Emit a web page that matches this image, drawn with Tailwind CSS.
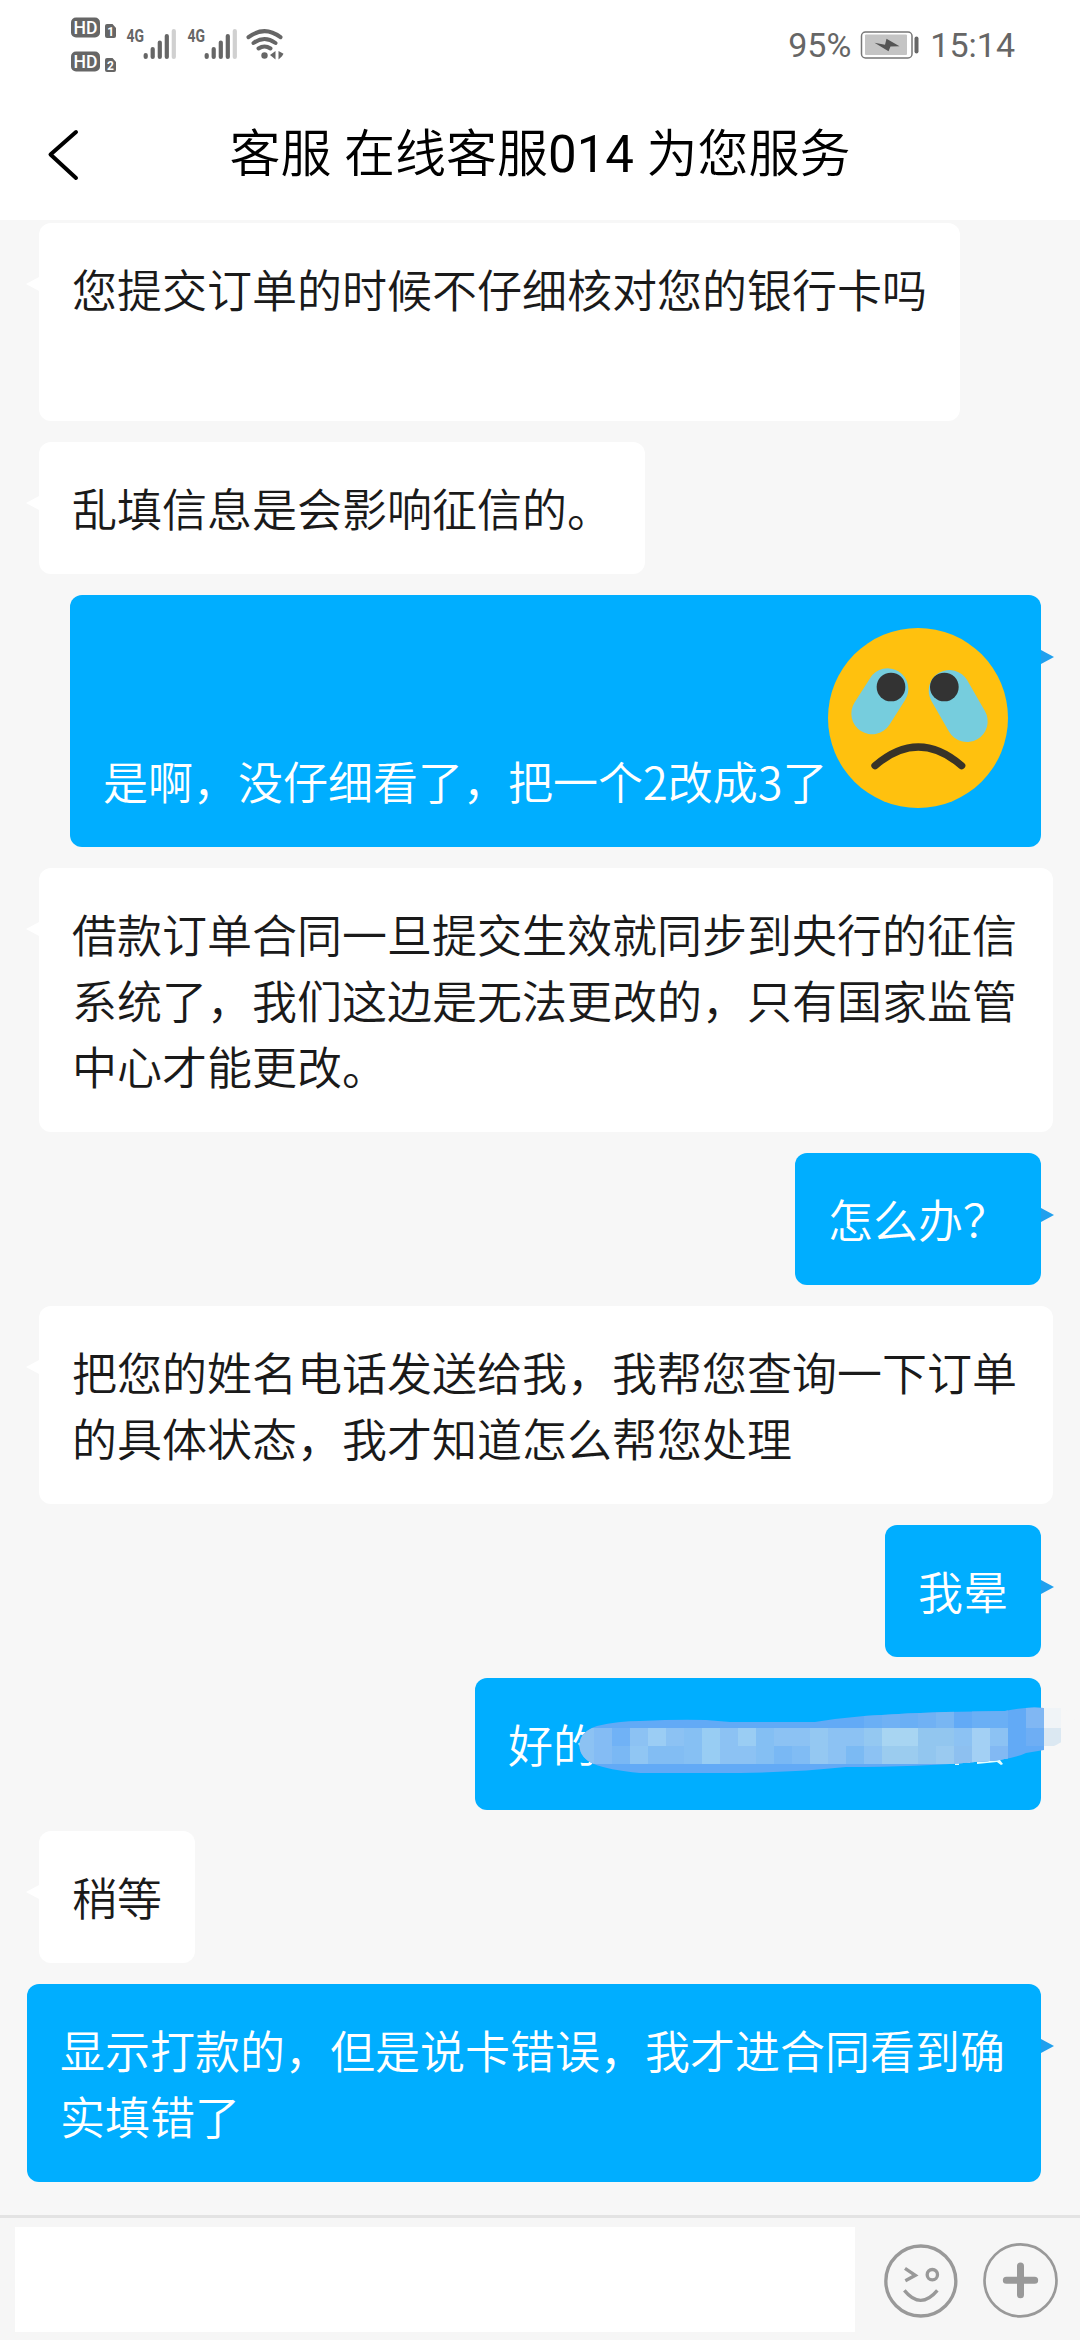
<!DOCTYPE html>
<html lang="zh-CN">
<head>
<meta charset="utf-8">
<title>在线客服</title>
<script src="https://cdn.jsdelivr.net/npm/@tailwindcss/browser@4"></script>
</head>
<body class="w-[1080px] h-[2340px] overflow-hidden flex flex-col bg-[#f7f7f7] text-[#1a1a1a] font-[350] font-['Noto_Sans_CJK_SC',sans-serif]">

<!-- Status bar -->
<div class="h-[90px] shrink-0 bg-white flex justify-between text-[#666]">
  <svg class="w-[310px] h-[90px]" viewBox="0 0 310 90" fill="#666" font-family="Roboto, sans-serif" font-weight="500">
    <rect x="71" y="17.5" width="29" height="20" rx="5"/>
    <text x="73.6" y="34" font-size="18.5" fill="#fff" textLength="24" lengthAdjust="spacingAndGlyphs">HD</text>
    <rect x="71" y="51.5" width="29" height="20" rx="5"/>
    <text x="73.6" y="68" font-size="18.5" fill="#fff" textLength="24" lengthAdjust="spacingAndGlyphs">HD</text>
    <path d="M107 24h5.500l3.500 4v8a2 2 0 0 1-2 2h-7a2 2 0 0 1-2-2v-10a2 2 0 0 1 2-2z"/>
    <text x="107.300" y="36" font-size="12" font-weight="700" fill="#fff">1</text>
    <path d="M107 58h5.500l3.500 4v8a2 2 0 0 1-2 2h-7a2 2 0 0 1-2-2v-10a2 2 0 0 1 2-2z"/>
    <text x="107" y="70" font-size="12" font-weight="700" fill="#fff">2</text>
    <text x="126.500" y="42" font-size="18.500" font-weight="700" textLength="17.500" lengthAdjust="spacingAndGlyphs">4G</text>
    <text x="187.500" y="42" font-size="18.500" font-weight="700" textLength="17.500" lengthAdjust="spacingAndGlyphs">4G</text>
    <g stroke="#666" stroke-width="4.200" stroke-linecap="round">
      <path d="M145.700 55v2M152.700 49v8M159.800 42.500v14.500M166.800 36v21"/>
      <path d="M173.800 31v26" stroke="#d0d0d0"/>
      <path d="M206.700 55v2M213.700 49v8M220.800 42.500v14.500M227.800 36v21"/>
      <path d="M234.800 31v26" stroke="#d0d0d0"/>
    </g>
    <g fill="none" stroke="#666" stroke-width="4" stroke-linecap="round">
      <path d="M248.500 37.200Q264.500 25 280.500 37.200M253.500 43Q264.500 35 275.500 43M258.500 48.500Q264.500 44.500 270.500 48.500"/>
    </g>
    <circle cx="264.500" cy="55.500" r="3.200"/>
    <path d="M275.500 51v8.500l-5.500-4.500zM278.500 51l5 2.700-1.500 2.500-3.500 3.300z"/>
  </svg>
  <div class="flex items-center pr-[65px] text-[34px] leading-none font-normal font-['Roboto']">
    <span>95%</span>
    <svg class="w-[59px] h-[28px] ml-[9px] mr-[11px]" viewBox="861 30.500 59 28">
      <rect x="862.500" y="31.500" width="50.500" height="26" rx="4" fill="#fff" stroke="#777" stroke-width="1.500"/>
      <rect x="866" y="34" width="42" height="20.500" rx="1" fill="#c4c4c4"/>
      <path d="M875.500 42.300l10.500 2 1.500-6 13 7.500-9 .2-2 4.700z" fill="#555"/>
      <rect x="915.500" y="36" width="4" height="17" rx="2" fill="#666"/>
    </svg>
    <span>15:14</span>
  </div>
</div>

<!-- Title bar -->
<header class="h-[130px] shrink-0 bg-white flex items-start">
  <svg class="w-[34px] h-[54px] ml-[46px] mt-[37px]" viewBox="46 127 34 54" fill="none" stroke="#000" stroke-width="4" stroke-linecap="round" stroke-linejoin="round"><path d="M76 132L50.500 154.500 76 178"/></svg>
  <h1 class="flex-1 mt-[27px] mr-[80px] text-center text-[51px] leading-[76px] text-black font-[350] whitespace-nowrap font-['Roboto','Noto_Sans_CJK_SC',sans-serif]">客服 在线客服<span class="font-normal">014</span> 为您服务</h1>
</header>

<!-- Conversation -->
<main class="h-[1995px] shrink-0 flex flex-col items-start gap-[21px] pt-[3px] pl-[39px] pr-[27px] text-[45px] leading-[66px]">
  <div class="relative bg-white rounded-[12px] p-[33px] h-[198px]">
    <svg class="absolute left-[-13px] top-[54px] w-[13px] h-[14px]" viewBox="0 0 13 14"><path d="M13 0v14L0 7z" fill="#fff"/></svg>
    您提交订单的时候不仔细核对您的银行卡吗
  </div>
  <div class="relative bg-white rounded-[12px] p-[33px]">
    <svg class="absolute left-[-13px] top-[54px] w-[13px] h-[14px]" viewBox="0 0 13 14"><path d="M13 0v14L0 7z" fill="#fff"/></svg>
    乱填信息是会影响征信的。
  </div>
  <div class="relative self-end mr-[12px] bg-[#00aeff] text-white rounded-[12px] p-[33px] w-[971px] h-[252px] flex items-end justify-between whitespace-nowrap">
    <svg class="absolute right-[-13px] top-[55px] w-[13px] h-[14px]" viewBox="0 0 13 14"><path d="M0 0v14l13-7z" fill="#20a0ee"/></svg>
    <span>是啊，没仔细看了，把一个2改成3了</span>
    <svg class="w-[180px] h-[180px] mb-[6px]" viewBox="143 143 540 540">
      <circle cx="413" cy="413" r="270" fill="#ffc10e"/>
      <g stroke="#76cddd" stroke-width="124" stroke-linecap="round"><path d="M322 326L275 400M507 331L560 423"/></g>
      <circle cx="332" cy="320" r="43" fill="#333"/><circle cx="492" cy="320" r="43" fill="#333"/>
      <path d="M284 556Q414 444 544 556" fill="none" stroke="#383328" stroke-width="22" stroke-linecap="round"/>
    </svg>
  </div>
  <div class="relative bg-white rounded-[12px] p-[33px] w-[1014px]">
    <svg class="absolute left-[-13px] top-[54px] w-[13px] h-[14px]" viewBox="0 0 13 14"><path d="M13 0v14L0 7z" fill="#fff"/></svg>
    借款订单合同一旦提交生效就同步到央行的征信<br>系统了，我们这边是无法更改的，只有国家监管<br>中心才能更改。
  </div>
  <div class="relative self-end mr-[12px] bg-[#00aeff] text-white rounded-[12px] p-[33px]">
    <svg class="absolute right-[-13px] top-[55px] w-[13px] h-[14px]" viewBox="0 0 13 14"><path d="M0 0v14l13-7z" fill="#20a0ee"/></svg>
    怎么办？
  </div>
  <div class="relative bg-white rounded-[12px] p-[33px] w-[1014px]">
    <svg class="absolute left-[-13px] top-[54px] w-[13px] h-[14px]" viewBox="0 0 13 14"><path d="M13 0v14L0 7z" fill="#fff"/></svg>
    把您的姓名电话发送给我，我帮您查询一下订单<br>的具体状态，我才知道怎么帮您处理
  </div>
  <div class="relative self-end mr-[12px] bg-[#00aeff] text-white rounded-[12px] p-[33px]">
    <svg class="absolute right-[-13px] top-[55px] w-[13px] h-[14px]" viewBox="0 0 13 14"><path d="M0 0v14l13-7z" fill="#20a0ee"/></svg>
    我晕
  </div>
  <div class="relative self-end mr-[12px] bg-[#00aeff] text-white rounded-[12px] p-[33px] w-[566px]">
    好的
    <!-- Pixelated brush stroke over the private details -->
    <svg class="absolute left-0 top-0 w-[605px] h-[132px]" viewBox="475 1678 605 132">
      <path d="M955 1762h4v3h-4zM967 1761h3v2h-3zM977 1762l23-2 3 4 -2 1-4-3-20 2z" fill="#e4ffff"/>
      <clipPath id="brush"><path d="M579.500 1746Q579 1732 597 1726Q618 1721 640 1721Q680 1719 706 1720L730 1722L815 1722Q840 1718 864 1716Q910 1713 945 1712L1005 1711Q1028 1706 1044 1708L1061 1708Q1075 1712 1075 1724Q1073 1740 1044 1750L1026 1753Q1008 1761 975 1762Q920 1767 846 1767Q800 1772 740 1773L640 1773Q608 1770 594 1764Q580 1758 579.500 1746Z"/></clipPath>
      <g clip-path="url(#brush)" shape-rendering="crispEdges">
        <rect x="575" y="1700" width="469" height="80" fill="#62aaf6"/>
        <rect x="1044" y="1700" width="36" height="80" fill="#f7f7f7"/>
        <rect x="1044" y="1700" width="17" height="28" fill="#f0f4f7"/><rect x="1044" y="1728" width="17" height="18" fill="#dbe8f2"/>
        <rect x="1026" y="1700" width="18" height="28" fill="#80b7f3"/><rect x="1026" y="1728" width="18" height="18" fill="#6eaef4"/>
        <g fill="#6aaff5"><rect x="864" y="1710" width="18" height="18"/><rect x="900" y="1710" width="18" height="18"/><rect x="972" y="1710" width="36" height="18"/></g>
        <rect x="882" y="1710" width="18" height="18" fill="#70b1f4"/><rect x="918" y="1710" width="18" height="18" fill="#70b1f4"/><rect x="936" y="1710" width="18" height="18" fill="#78b6f3"/>
        <rect x="576" y="1728" width="432" height="36" fill="#8cc2f3"/>
        <rect x="594" y="1728" width="18" height="36" fill="#84bcf4"/>
        <rect x="612" y="1728" width="18" height="18" fill="#70b2f6"/>
        <rect x="612" y="1746" width="18" height="18" fill="#7ab8f4"/>
        <rect x="630" y="1746" width="18" height="18" fill="#90c6f3"/>
        <rect x="648" y="1728" width="18" height="18" fill="#9bcdf4"/>
        <rect x="648" y="1746" width="36" height="18" fill="#82bdf3"/>
        <rect x="684" y="1728" width="18" height="36" fill="#86c0f3"/>
        <rect x="702" y="1728" width="18" height="36" fill="#98cdf3"/>
        <rect x="738" y="1728" width="18" height="18" fill="#9acdf3"/>
        <rect x="756" y="1728" width="18" height="36" fill="#84bff3"/>
        <rect x="774" y="1746" width="18" height="18" fill="#79b8f4"/>
        <rect x="792" y="1746" width="18" height="18" fill="#80bcf4"/>
        <rect x="810" y="1728" width="18" height="36" fill="#94c8f2"/>
        <rect x="846" y="1746" width="18" height="18" fill="#7bbaf3"/>
        <rect x="864" y="1728" width="18" height="18" fill="#94c8f1"/>
        <rect x="882" y="1728" width="36" height="18" fill="#a8d5f2"/>
        <rect x="882" y="1746" width="36" height="18" fill="#9bccef"/>
        <rect x="918" y="1728" width="36" height="36" fill="#92c6ef"/>
        <rect x="936" y="1746" width="18" height="18" fill="#9acaf0"/>
        <rect x="954" y="1746" width="18" height="18" fill="#8dc0f0"/>
        <rect x="972" y="1728" width="18" height="36" fill="#a3d0f4"/>
        <rect x="990" y="1746" width="18" height="18" fill="#82b9f3"/>
      </g>
    </svg>
  </div>
  <div class="relative bg-white rounded-[12px] p-[33px]">
    <svg class="absolute left-[-13px] top-[54px] w-[13px] h-[14px]" viewBox="0 0 13 14"><path d="M13 0v14L0 7z" fill="#fff"/></svg>
    稍等
  </div>
  <div class="relative self-end mr-[12px] bg-[#00aeff] text-white rounded-[12px] p-[33px] w-[1014px] whitespace-nowrap">
    <svg class="absolute right-[-13px] top-[55px] w-[13px] h-[14px]" viewBox="0 0 13 14"><path d="M0 0v14l13-7z" fill="#20a0ee"/></svg>
    显示打款的，但是说卡错误，我才进合同看到确<br>实填错了
  </div>
</main>

<!-- Message input -->
<footer class="h-[125px] shrink-0 border-t-[3px] border-[#e3e3e3] bg-[#f6f6f6] flex items-start pt-[9px] pl-[15px]">
  <div class="w-[840px] h-[105px] bg-white"></div>
  <svg class="w-[74px] h-[74px] ml-[29px] mt-[17px]" viewBox="132 132 222 222" fill="none" stroke="#999" stroke-width="10">
    <circle cx="242.500" cy="243" r="105"/>
    <path d="M195 205L226 226 196 242"/><circle cx="277" cy="224" r="15.500"/>
    <path d="M193 271Q242 331 292 271"/>
  </svg>
  <svg class="w-[75px] h-[75px] ml-[25px] mt-[16px]" viewBox="429 128 225 225" fill="none" stroke="#999">
    <circle cx="541.500" cy="240" r="108" stroke-width="8"/>
    <path d="M499 240h85M541.500 197v86" stroke-width="21" stroke-linecap="round"/>
  </svg>
</footer>
</body>
</html>
